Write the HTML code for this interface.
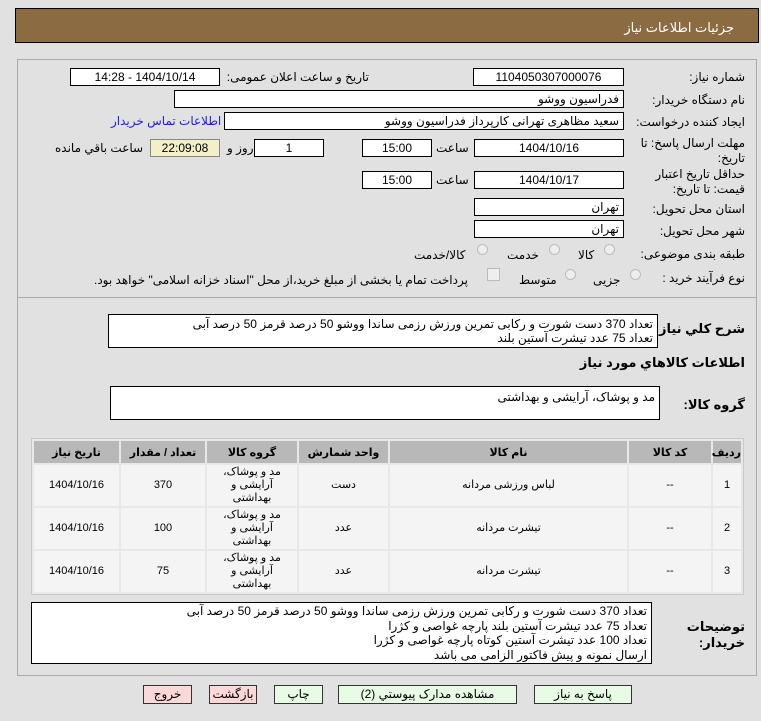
<!DOCTYPE html>
<html><head><meta charset="utf-8">
<style>
body{margin:0;width:761px;height:721px;background:#e1e1e1;font-family:"Liberation Sans","DejaVu Sans",sans-serif;font-size:12px;color:#000;position:relative;overflow:hidden}
.a{position:absolute;white-space:nowrap}
.r{direction:rtl;text-align:right}
.box{position:absolute;background:#fff;border:1px solid #000;box-sizing:border-box;direction:rtl;text-align:right;padding:0 4px;line-height:16px;font-size:12px;white-space:nowrap;overflow:hidden}
.c{text-align:center}
.rad{position:absolute;width:11px;height:11px;border:1px solid #bbb;border-radius:50%;background:#eee;box-sizing:border-box}
.btn{position:absolute;height:19px;border:1px solid #333;box-sizing:border-box;text-align:center;line-height:17px;font-size:12px;direction:rtl}
table{border-collapse:separate;border-spacing:2px;position:absolute;left:31px;top:438px;width:713px;table-layout:fixed;background:#e8e8e8;border:1px solid #c8c8c8}
td{background:#f4f4f4;text-align:center;font-size:11px;line-height:13px;padding:0}
th{background:#b8b8b8;font-size:11px;height:22px;font-weight:bold;padding:0}
</style></head><body>
<div class="a" style="left:15px;top:8px;width:744px;height:35px;background:#8b6b42;border:1px solid #000;box-sizing:border-box"></div>
<div class="a r" style="right:27px;top:20px;color:#fff;font-size:13px">جزئیات اطلاعات نیاز</div>
<div class="a" style="left:17px;top:59px;width:740px;height:617px;border:1px solid #aaa;box-sizing:border-box"></div>
<div class="a" style="left:17px;top:297px;width:740px;border-top:1px solid #aaa"></div>

<div class="a r" style="right:16px;top:70px">شماره نیاز:</div>
<div class="box c" style="left:473px;top:68px;width:151px;height:18px">1104050307000076</div>
<div class="a r" style="right:392px;top:70px">تاریخ و ساعت اعلان عمومی:</div>
<div class="box c" style="left:70px;top:68px;width:150px;height:18px">1404/10/14 - 14:28</div>

<div class="a r" style="right:16px;top:93px">نام دستگاه خریدار:</div>
<div class="box" style="left:174px;top:90px;width:450px;height:18px">فدراسیون ووشو</div>

<div class="a r" style="right:16px;top:115px">ایجاد کننده درخواست:</div>
<div class="box" style="left:224px;top:112px;width:400px;height:18px">سعید مظاهری تهرانی کارپرداز فدراسیون ووشو</div>
<div class="a r" style="left:111px;top:114px;color:#2020e0">اطلاعات تماس خریدار</div>

<div class="a r" style="right:16px;top:136px;line-height:15px">مهلت ارسال پاسخ: تا<br>تاریخ:</div>
<div class="box c" style="left:474px;top:139px;width:150px;height:18px">1404/10/16</div>
<div class="a r" style="left:436px;top:141px">ساعت</div>
<div class="box c" style="left:362px;top:139px;width:70px;height:18px">15:00</div>
<div class="box c" style="left:254px;top:139px;width:70px;height:18px">1</div>
<div class="a r" style="left:227px;top:141px">روز و</div>
<div class="box c" style="left:150px;top:139px;width:70px;height:18px;background:#f3f0c8;border-color:#888">22:09:08</div>
<div class="a r" style="left:55px;top:141px">ساعت باقي مانده</div>

<div class="a r" style="right:16px;top:167px;line-height:15px">حداقل تاریخ اعتبار<br>قیمت: تا تاریخ:</div>
<div class="box c" style="left:474px;top:171px;width:150px;height:18px">1404/10/17</div>
<div class="a r" style="left:436px;top:173px">ساعت</div>
<div class="box c" style="left:362px;top:171px;width:70px;height:18px">15:00</div>

<div class="a r" style="right:16px;top:202px">استان محل تحویل:</div>
<div class="box" style="left:474px;top:198px;width:150px;height:18px">تهران</div>
<div class="a r" style="right:16px;top:224px">شهر محل تحویل:</div>
<div class="box" style="left:474px;top:220px;width:150px;height:18px">تهران</div>

<div class="a r" style="right:16px;top:247px">طبقه بندی موضوعی:</div>
<div class="rad" style="left:604px;top:244px"></div><div class="a r" style="left:578px;top:248px">کالا</div>
<div class="rad" style="left:549px;top:244px"></div><div class="a r" style="left:507px;top:248px">خدمت</div>
<div class="rad" style="left:477px;top:244px"></div><div class="a r" style="left:414px;top:248px">کالا/خدمت</div>

<div class="a r" style="right:16px;top:271px">نوع فرآیند خرید :</div>
<div class="rad" style="left:630px;top:269px"></div><div class="a r" style="left:593px;top:273px">جزیی</div>
<div class="rad" style="left:565px;top:269px"></div><div class="a r" style="left:519px;top:273px">متوسط</div>
<div class="a" style="left:487px;top:268px;width:11px;height:11px;border:1px solid #bbb;background:#eee"></div>
<div class="a r" style="left:94px;top:273px">پرداخت تمام یا بخشی از مبلغ خرید،از محل "اسناد خزانه اسلامی" خواهد بود.</div>

<div class="a r" style="right:16px;top:321px;font-weight:bold;font-size:13px">شرح کلي نیاز:</div>
<div class="box" style="left:108px;top:314px;width:550px;height:34px;line-height:14px;padding-top:2px">تعداد 370 دست شورت و رکابی تمرین ورزش رزمی ساندا ووشو 50 درصد قرمز 50 درصد آبی<br>تعداد 75 عدد تیشرت آستین بلند</div>
<div class="a r" style="right:16px;top:355px;font-weight:bold;font-size:13px">اطلاعات کالاهاي مورد نیاز</div>
<div class="a r" style="right:16px;top:397px;font-weight:bold;font-size:13px">گروه کالا:</div>
<div class="box" style="left:110px;top:386px;width:550px;height:34px;padding-top:2px">مد و پوشاک، آرایشی و بهداشتی</div>

<table dir="rtl">
<colgroup><col style="width:28px"><col style="width:82px"><col style="width:237px"><col style="width:89px"><col style="width:90px"><col style="width:84px"><col></colgroup>
<tr><th>ردیف</th><th>کد کالا</th><th>نام کالا</th><th>واحد شمارش</th><th>گروه کالا</th><th>تعداد / مقدار</th><th>تاریخ نیاز</th></tr>
<tr style="height:41px"><td>1</td><td>--</td><td>لباس ورزشی مردانه</td><td>دست</td><td>مد و پوشاک،<br>آرایشی و<br>بهداشتی</td><td>370</td><td>1404/10/16</td></tr>
<tr style="height:41px"><td>2</td><td>--</td><td>تیشرت مردانه</td><td>عدد</td><td>مد و پوشاک،<br>آرایشی و<br>بهداشتی</td><td>100</td><td>1404/10/16</td></tr>
<tr style="height:41px"><td>3</td><td>--</td><td>تیشرت مردانه</td><td>عدد</td><td>مد و پوشاک،<br>آرایشی و<br>بهداشتی</td><td>75</td><td>1404/10/16</td></tr>
</table>

<div class="a r" style="right:16px;top:619px;font-weight:bold;font-size:13px;line-height:16px">توضیحات<br>خریدار:</div>
<div class="box" style="left:31px;top:602px;width:621px;height:62px;line-height:14.5px;padding-top:1px">تعداد 370 دست شورت و رکابی تمرین ورزش رزمی ساندا ووشو 50 درصد قرمز 50 درصد آبی<br>تعداد 75 عدد تیشرت آستین بلند پارچه غواصی و کژرا<br>تعداد 100 عدد تیشرت آستین کوتاه پارچه غواصی و کژرا<br>ارسال نمونه و پیش فاکتور الزامی می باشد</div>

<div class="btn" style="left:534px;top:685px;width:98px;background:#e8fbe4">پاسخ به نیاز</div>
<div class="btn" style="left:338px;top:685px;width:179px;background:#e8fbe4">مشاهده مدارک پیوستي (2)</div>
<div class="btn" style="left:274px;top:685px;width:49px;background:#e8fbe4">چاپ</div>
<div class="btn" style="left:209px;top:685px;width:48px;background:#fcd8d8">بازگشت</div>
<div class="btn" style="left:143px;top:685px;width:49px;background:#fcd8d8">خروج</div>
</body></html>
